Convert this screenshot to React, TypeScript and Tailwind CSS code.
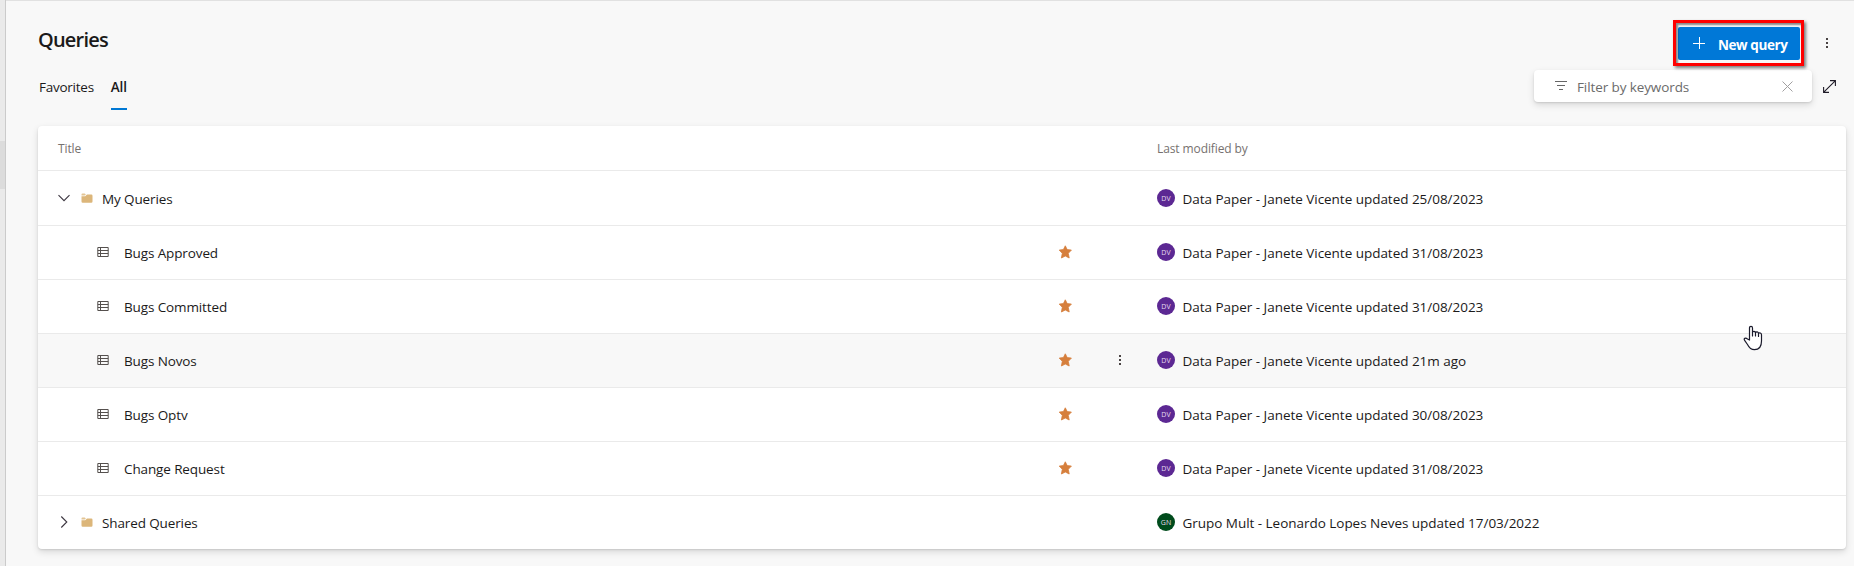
import React from "react";

type Row = {
  kind: "open" | "closed" | "query";
  title: string;
  by: string;
  initials: string;
  hovered?: boolean;
};

const DV = "Data Paper - Janete Vicente updated ";

const rows: Row[] = [
  { kind: "open", title: "My Queries", by: DV + "25/08/2023", initials: "DV" },
  { kind: "query", title: "Bugs Approved", by: DV + "31/08/2023", initials: "DV" },
  { kind: "query", title: "Bugs Committed", by: DV + "31/08/2023", initials: "DV" },
  { kind: "query", title: "Bugs Novos", by: DV + "21m ago", initials: "DV", hovered: true },
  { kind: "query", title: "Bugs Optv", by: DV + "30/08/2023", initials: "DV" },
  { kind: "query", title: "Change Request", by: DV + "31/08/2023", initials: "DV" },
  { kind: "closed", title: "Shared Queries", by: "Grupo Mult - Leonardo Lopes Neves updated 17/03/2022", initials: "GN" },
];

function Chevron({ open }: { open: boolean }) {
  return (
    <svg width="12" height="12" viewBox="0 0 12 12" fill="none" stroke="#3c3640" strokeWidth="1.1">
      {open ? <path d="M.5 3.2 6 8.7l5.500-5.500" /> : <path d="M3.300.500 8.800 6l-5.500 5.500" />}
    </svg>
  );
}

function Folder() {
  return (
    <svg width="12" height="10" viewBox="0 0 12 10" fill="#dcb67a">
      <path d="M.5 2.400V1.500Q.5.500 1.500.500H3.700L4.900 1.400 3.700 2.400z" opacity=".8" />
      <path d="M.5 3.300H4.200L6 1.500h4.300q1.200 0 1.200 1.200v5.800q0 1.200-1.200 1.200H1.700Q.5 9.700.5 8.500z" />
    </svg>
  );
}

function QueryIcon() {
  return (
    <svg width="12" height="12" viewBox="0 0 12 12" fill="none" stroke="#55504e" strokeWidth="1">
      <path d="M.8 1.500h10.400v9H.8zM.8 4.500h10.400M.8 7.500h10.400M3.500 1.500v9" />
    </svg>
  );
}

function Star() {
  return (
    <svg width="14" height="14" viewBox="0 0 14 14" fill="#d67f3c" stroke="#d67f3c" strokeWidth=".8" strokeLinejoin="round">
      <path d="M7.300.8 9.200 4.600l4.200.5-3.100 3.200.9 4.700-3.900-2-3.900 2 .9-4.700L1.200 5.100l4.200-.5z" />
    </svg>
  );
}

function Kebab() {
  return (
    <svg width="4" height="12" viewBox="0 0 4 12" fill="#4a4444">
      <path d="M1 1h2v2H1zM1 5h2v2H1zM1 9h2v2H1z" />
    </svg>
  );
}

function TableRow({ row }: { row: Row }) {
  const height = row.kind === "open" ? "h-[55px]" : row.kind === "closed" ? "h-[53px] pb-px" : "h-[54px] pb-px";
  const border = row.kind === "closed" ? "" : "border-b border-[#eaeaea]";
  const bg = row.hovered ? "bg-[#f8f8f8]" : "";
  return (
    <div className={`flex items-center ${height} ${border} ${bg}`}>
      <div className="flex w-[1020px] items-center">
        {row.kind === "query" ? (
          <span className="flex w-[86px] items-center pl-[59px]"><QueryIcon /></span>
        ) : (
          <span className="flex w-[64px] items-center gap-[11px] pl-5"><Chevron open={row.kind === "open"} /><Folder /></span>
        )}
        <span className="whitespace-nowrap pt-[2px] tracking-[-0.12px]">{row.title}</span>
      </div>
      <div className="flex w-[99px] items-center">
        {row.kind === "query" && <Star />}
        {row.hovered && <span className="ml-[46px]"><Kebab /></span>}
      </div>
      <div className="flex items-center gap-2">
        <span className={`flex size-[18px] items-center justify-center rounded-full text-[7px] leading-none text-[#e6dcf0] ${row.initials === "GN" ? "bg-[#004b1c]" : "bg-[#5c2893]"}`}>{row.initials}</span>
        <span className="-ml-[0.5px] whitespace-nowrap pt-[2px] tracking-[-0.03px]">{row.by}</span>
      </div>
    </div>
  );
}

export default function App() {
  return (
    <div className="relative flex h-[566px] w-[1854px] overflow-hidden bg-[#f8f8f8] font-['Open_Sans','Noto_Sans',sans-serif] text-[13.5px] leading-5 text-[#1b1a1a]">
      <aside className="h-full w-[6px] border-r border-[#cbcbcb] bg-[#eaeaea] pt-[141px]">
        <div className="h-12 bg-[#dcdcdc]" />
      </aside>
      <main className="flex-1 border-t border-[#e1e1e1] pl-8 pr-2">
        <div className="flex h-[125px] justify-between">
          <div className="pt-[25px]">
            <h1 className="text-[20px] font-semibold leading-7 tracking-[-0.8px]">Queries</h1>
            <nav className="mt-[23px] flex gap-[17px] pl-[1px]">
              <span className="tracking-[-0.25px]">Favorites</span>
              <span className="h-[33px] w-4 whitespace-nowrap border-b-2 border-[#0078d4] font-semibold tracking-[-0.2px]">All</span>
            </nav>
          </div>
          <div className="pr-[10px] pt-[26px]">
            <div className="flex h-[33px] items-center pl-[144px]">
              <button className="relative flex h-[33px] w-[122px] items-center rounded-[2px] bg-[#0078d7] pl-[15px] font-bold text-white">
                <svg width="12" height="12" viewBox="0 0 12 12" stroke="#fff" strokeWidth="1" className="-mt-[2px]"><path d="M0 6.500h12M6.500 0v12" /></svg>
                <span className="ml-[13px] whitespace-nowrap pt-[2px] tracking-[-0.42px]">New query</span>
                <span className="absolute -left-[5px] -top-[7px] z-10 h-[46px] w-[131px] border-3 border-[#ff0000] shadow-[2px_2px_3px_rgba(0,0,0,.5),inset_2px_2px_2px_rgba(0,0,0,.45)]" />
              </button>
              <span className="ml-[25px] -mt-px"><Kebab /></span>
            </div>
            <div className="mt-[10px] flex h-8 items-center">
              <div className="flex h-8 w-[278px] items-center rounded bg-white pl-[21px] shadow-[0_3px_7px_rgba(0,0,0,.13),0_1px_2px_rgba(0,0,0,.11)]">
                <svg width="12" height="10" viewBox="0 0 12 10" stroke="#666" strokeWidth="1"><path d="M0 .5h12M2 4.500h8M4 8.500h4" /></svg>
                <span className="ml-[10px] w-[205px] whitespace-nowrap pt-[2px] tracking-[-0.1px] text-[#6b6b6b]">Filter by keywords</span>
                <svg width="11" height="11" viewBox="0 0 11 11" stroke="#a19fa0" strokeWidth="1"><path d="m.5.500 10 10M10.500.500l-10 10" /></svg>
              </div>
              <svg width="13" height="13" viewBox="0 0 13 13" fill="none" stroke="#201c28" strokeWidth="1.100" className="ml-[11px]"><path d="m.8 12.200 11.400-11.400M7 .6h5.400V6M.6 7v5.400H6" /></svg>
            </div>
          </div>
        </div>
        <section className="h-[423px] w-[1808px] rounded bg-white shadow-[0_3px_7px_rgba(0,0,0,.13),0_1px_2px_rgba(0,0,0,.11)]">
          <div className="flex h-[45px] border-b border-[#eaeaea] pt-[13px] text-[12px] text-[#76716f]">
            <span className="w-[1119px] pl-5 tracking-[-0.1px]">Title</span>
            <span className="tracking-[-0.1px]">Last modified by</span>
          </div>
          {rows.map((row) => <TableRow key={row.title} row={row} />)}
        </section>
      </main>
      <svg className="absolute left-[1743px] top-[325px]" width="20" height="26" viewBox="0 0 20 26" fill="#fff" stroke="#1a1a2b" strokeWidth="1.200" strokeLinejoin="round" strokeLinecap="round">
        <path d="M6.500 15V3Q6.500 1.300 8 1.300T9.500 3V7.500Q9.700 6.300 11 6.400T12.500 7.800Q13 6.700 14.200 6.900T15.500 8.500Q16.200 7.600 17.300 8T18.500 9.700V16C18.500 21 16.500 24.700 11.500 24.700C7.500 24.700 5.500 21.500 4.500 19.500L1.800 15.700Q.6 14 1.800 13.400T4.500 14z" />
        <path d="M9.500 7.500v3.500M12.500 7.800v3.200M15.500 8.500v3" fill="none" />
      </svg>
    </div>
  );
}
